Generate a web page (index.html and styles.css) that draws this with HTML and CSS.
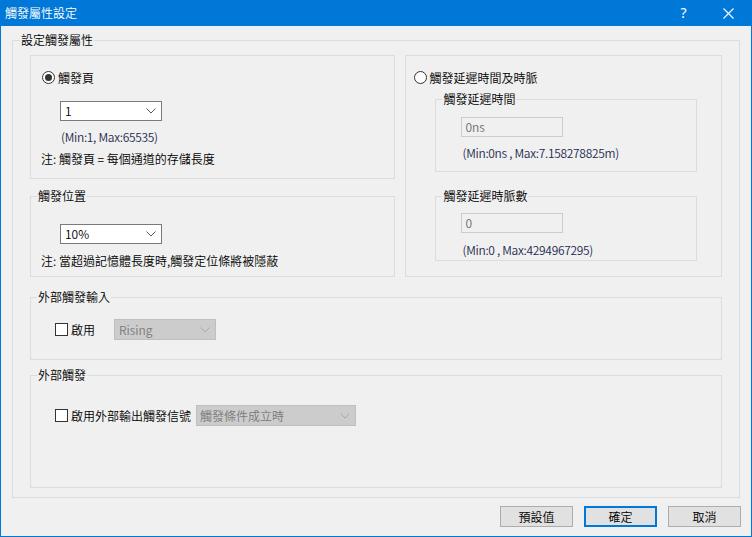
FILE: index.html
```html
<!DOCTYPE html>
<html lang="zh-Hant">
<head>
<meta charset="utf-8">
<title>觸發屬性設定</title>
<link rel="stylesheet" href="styles.css">
</head>
<body>
<div class="window">
  <div class="titlebar">
    <span class="title">觸發屬性設定</span>
    <span class="tb-help">?</span>
    <span class="tb-close"><svg width="11" height="11" viewBox="0 0 11 11"><path d="M0.5 0.5 L10.5 10.5 M10.5 0.5 L0.5 10.5" stroke="#fff" stroke-width="1.1" fill="none"/></svg></span>
  </div>

  <div class="outer">
    <span class="gtitle outer-title">設定觸發屬性</span>
    <div class="toprow">
      <div class="leftcol">
        <div class="group box1">
          <div class="radio-row">
            <span class="radio checked"></span><span class="lbl">觸發頁</span>
          </div>
          <div class="combo combo-page"><span>1</span><svg class="chev" width="10" height="6" viewBox="0 0 10 6"><path d="M0.5 0.5 L5 5 L9.5 0.5" stroke="#5a5a5a" fill="none"/></svg></div>
          <div class="range range-page">(Min:1, Max:65535)</div>
          <div class="note">注: 觸發頁 = 每個通道的存儲長度</div>
        </div>
        <div class="group box2">
          <span class="gtitle">觸發位置</span>
          <div class="combo combo-pos"><span>10%</span><svg class="chev" width="10" height="6" viewBox="0 0 10 6"><path d="M0.5 0.5 L5 5 L9.5 0.5" stroke="#5a5a5a" fill="none"/></svg></div>
          <div class="note note-pos">注: 當超過記憶體長度時,觸發定位條將被隱蔽</div>
        </div>
      </div>
      <div class="group box3">
        <div class="radio-row radio-row-right">
          <span class="radio"></span><span class="lbl lbl-right">觸發延遲時間及時脈</span>
        </div>
        <div class="group subbox subbox-a">
          <span class="gtitle">觸發延遲時間</span>
          <div class="textbox">0ns</div>
          <div class="range range-sub">(Min:0ns , Max:7.158278825m)</div>
        </div>
        <div class="group subbox subbox-b">
          <span class="gtitle">觸發延遲時脈數</span>
          <div class="textbox tb-b">0</div>
          <div class="range range-sub">(Min:0 , Max:4294967295)</div>
        </div>
      </div>
    </div>

    <div class="group box-ext-in">
      <span class="gtitle">外部觸發輸入</span>
      <div class="check-row row-in">
        <span class="check"></span><span class="lbl">啟用</span>
        <div class="combo disabled combo-edge"><span>Rising</span><svg class="chev" width="10" height="6" viewBox="0 0 10 6"><path d="M0.5 0.5 L5 5 L9.5 0.5" stroke="#a8a8a8" fill="none"/></svg></div>
      </div>
    </div>

    <div class="group box-ext-out">
      <span class="gtitle">外部觸發</span>
      <div class="check-row row-out">
        <span class="check"></span><span class="lbl">啟用外部輸出觸發信號</span>
        <div class="combo disabled combo-cond"><span>觸發條件成立時</span><svg class="chev" width="10" height="6" viewBox="0 0 10 6"><path d="M0.5 0.5 L5 5 L9.5 0.5" stroke="#a8a8a8" fill="none"/></svg></div>
      </div>
    </div>
  </div>

  <div class="buttons">
    <button class="btn">預設值</button>
    <button class="btn default">確定</button>
    <button class="btn">取消</button>
  </div>
</div>
</body>
</html>
```
FILE: styles.css
```css
* { box-sizing: border-box; }
html, body { margin: 0; padding: 0; background: #f0f0f0; }
body {
  font-family: "Noto Sans CJK TC", "Noto Sans", sans-serif;
  font-size: 12px;
  font-weight: 350;
  line-height: 14px;
  color: #000;
}
.window {
  width: 752px;
  height: 537px;
  border: 1px solid #0078d7;
  border-top: 0;
  background: #f0f0f0;
  display: flex;
  flex-direction: column;
}
.titlebar {
  height: 26px;
  background: #0078d7;
  display: flex;
  align-items: center;
  color: #fff;
}
.title { flex: 1; padding-left: 4px; }
.tb-help {
  width: 46px;
  text-align: center;
  font-family: "Noto Sans", sans-serif;
  font-weight: 400;
  font-size: 14px;
  padding-left: 1px;
}
.tb-close {
  width: 45px;
  height: 26px;
  display: flex;
  align-items: center;
  justify-content: center;
}

.group {
  border: 1px solid #dcdcdc;
  display: flex;
  flex-direction: column;
  align-items: flex-start;
}
.gtitle {
  display: block;
  height: 14px;
  line-height: 14px;
  margin: -8px 0 0 6px;
  padding: 0 1px;
  background: #f0f0f0;
  white-space: nowrap;
}

.outer {
  margin: 14px 11px 0 11px;
  height: 458px;
  border: 1px solid #dcdcdc;
  padding: 0 17px;
  display: flex;
  flex-direction: column;
}
.outer-title { margin-left: -10px; align-self: flex-start; }

.toprow {
  margin-top: 8px;
  display: flex;
  gap: 10px;
  height: 222px;
}
.leftcol { width: 366px; display: flex; flex-direction: column; }
.box1 { height: 124px; }
.box2 { height: 81px; margin-top: 17px; }
.box3 { width: 317px; height: 222px; }

.radio-row {
  margin-top: 15px;
  margin-left: 11px;
  display: flex;
  align-items: center;
  height: 13px;
}
.radio-row-right { margin-left: 8px; }
.radio {
  width: 13px;
  height: 13px;
  border: 1px solid #333;
  border-radius: 50%;
  background: #fff;
  display: flex;
  align-items: center;
  justify-content: center;
}
.radio.checked::after {
  content: "";
  width: 7px;
  height: 7px;
  border-radius: 50%;
  background: #333;
}
.lbl { margin-left: 3px; white-space: nowrap; }
.lbl-right { margin-left: 2px; }

.combo {
  width: 102px;
  height: 20px;
  border: 1px solid #7a7a7a;
  background: #fff;
  display: flex;
  align-items: center;
  justify-content: space-between;
  padding: 0 5px 0 4px;
  font-family: "Noto Sans CJK TC", sans-serif;
}
.combo .chev { flex: none; }
.combo-page { margin: 17px 0 0 29px; }
.combo-pos { margin: 21px 0 0 29px; }
.combo.disabled {
  background: #cccccc;
  border-color: #bfbfbf;
  color: #7a7a7a;
  height: 21px;
}
.combo-edge { margin-left: 19px; }
.combo-cond { margin-left: 5px; width: 160px; padding-left: 3px; }

.range { color: #1e2a4f; white-space: nowrap; letter-spacing: -0.3px; }
.range-page { margin: 9px 0 0 30px; }
.note { margin: 8px 0 0 10px; white-space: nowrap; }
.note-pos { margin-top: 10px; }

.subbox { width: 262px; margin-left: 29px; }
.subbox-a { height: 73px; margin-top: 15px; }
.subbox-b { height: 65px; margin-top: 24px; }
.textbox {
  width: 102px;
  height: 20px;
  border: 1px solid #cccccc;
  background: #f0f0f0;
  color: #6d6d6d;
  padding-left: 3px;
  display: flex;
  align-items: center;
  margin: 11px 0 0 25px;
}
.tb-b { margin-top: 10px; }
.range-sub { margin: 9px 0 0 26px; }
.subbox-b .range-sub { margin-top: 10px; }

.box-ext-in { height: 63px; margin-top: 20px; }
.box-ext-out { height: 113px; margin-top: 15px; }
.check-row {
  display: flex;
  align-items: center;
  height: 21px;
  margin-left: 24px;
}
.row-in { margin-top: 15px; }
.row-out { margin-top: 23px; }
.check {
  width: 13px;
  height: 13px;
  border: 1px solid #333;
  background: #fff;
  flex: none;
}

.buttons {
  margin-top: 8px;
  display: flex;
  justify-content: flex-end;
  gap: 11px;
  padding-right: 10px;
}
.btn {
  width: 73px;
  height: 21px;
  border: 1px solid #adadad;
  background: #e1e1e1;
  font-family: "Noto Sans CJK TC", sans-serif;
  font-size: 12px;
  font-weight: 350;
  line-height: 14px;
  color: #000;
  padding: 0;
  margin: 0;
}
.btn.default { border: 2px solid #0078d7; }
```
